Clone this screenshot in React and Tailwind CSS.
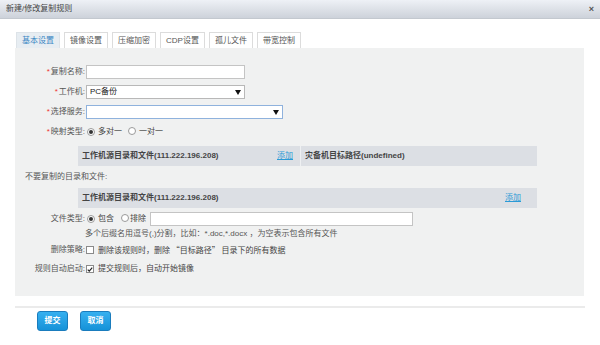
import React from 'react';

const tabs = ['基本设置', '镜像设置', '压缩加密', 'CDP设置', '孤儿文件', '带宽控制'];

function Radio({ checked }) {
  return (
    <span className="inline-flex w-[8px] h-[8px] rounded-full border border-[#9a9a9a] bg-white items-center justify-center">
      {checked && <span className="w-[4px] h-[4px] rounded-full bg-[#333]" />}
    </span>
  );
}

function Checkbox({ checked }) {
  return (
    <span className="inline-flex w-[8px] h-[8px] border border-[#8a8a8a] bg-white items-center justify-center">
      {checked && (
        <svg width="7" height="7" viewBox="0 0 8 8">
          <path d="M1 4.2 L3 6.2 L7 1.5" stroke="#222" strokeWidth="1.6" fill="none" />
        </svg>
      )}
    </span>
  );
}

function Label({ children, star }) {
  return (
    <div className="w-[70px] shrink-0 text-right text-[#555]">
      {star && <span className="text-[#e33] mr-[1px]">*</span>}
      {children}
    </div>
  );
}

function Select({ value, width, focus }) {
  return (
    <div
      className={`h-[14px] bg-white flex items-center justify-between px-[3px] border ${focus ? 'border-[#8fb2dd]' : 'border-[#b8b8b8]'}`}
      style={{ width }}
    >
      <span className="text-[#222]">{value}</span>
      <svg width="6" height="5" viewBox="0 0 6 5">
        <path d="M0 0 H6 L3 5 Z" fill="#111" />
      </svg>
    </div>
  );
}

export default function App() {
  return (
    <div className="w-[600px] h-[345px] bg-white font-['Liberation_Sans','Noto_Sans_CJK_SC',sans-serif] text-[8px] leading-none text-[#333] overflow-hidden">
      {/* title bar */}
      <div className="h-[19px] bg-gradient-to-b from-[#eef1f6] to-[#cdd2da] border-b border-[#c3c8cf] flex items-center justify-between pl-[6px] pr-[6px]">
        <span className="text-[#444]">新建/修改复制规则</span>
        <span className="text-[#555] text-[9px] font-bold">×</span>
      </div>

      {/* tabs */}
      <div className="mt-[13px] ml-[16px] flex gap-[4px]">
        {tabs.map((t, i) => (
          <div
            key={t}
            className={`h-[16px] px-[5px] flex items-center border border-b-0 ${i === 0 ? 'bg-[#e7edf2] border-[#dde3e8] text-[#3b86c4]' : 'bg-white border-[#dcdcdc] text-[#555]'}`}
          >
            {t}
          </div>
        ))}
      </div>

      {/* panel */}
      <div className="ml-[15px] w-[569px] bg-[#f0f1f1] pt-[17px] pb-[20px]">
        <div className="flex items-center h-[14px]">
          <Label star>复制名称:</Label>
          <div className="ml-[1px] w-[159px] h-[14px] bg-white border border-[#c4c4c4]" />
        </div>
        <div className="flex items-center h-[14px] mt-[6px]">
          <Label star>工作机:</Label>
          <div className="ml-[1px]">
            <Select value="PC备份" width={159} />
          </div>
        </div>
        <div className="flex items-center h-[14px] mt-[6px]">
          <Label star>选择服务:</Label>
          <div className="ml-[1px]">
            <Select value="" width={197} focus />
          </div>
        </div>
        <div className="flex items-center h-[14px] mt-[6px]">
          <Label star>映射类型:</Label>
          <div className="ml-[2px] flex items-center gap-[2px] text-[#444]">
            <Radio checked />
            <span className="ml-[1px]">多对一</span>
            <span className="ml-[4px]"><Radio /></span>
            <span className="ml-[1px]">一对一</span>
          </div>
        </div>

        {/* bar 1 */}
        <div className="ml-[63px] mt-[7px] w-[459px] h-[20px] bg-[#dcdfe4] flex items-center font-bold text-[#444]">
          <div className="w-[223px] h-full flex items-center justify-between pl-[4px] pr-[7px] border-r border-[#eef0f2]">
            <span>工作机源目录和文件(111.222.196.208)</span>
            <span className="font-normal text-[#2a9ad6] underline">添加</span>
          </div>
          <div className="pl-[4px]">灾备机目标路径(undefined)</div>
        </div>

        <div className="h-[14px] mt-[4px] pl-[10px] flex items-center text-[#555]">不要复制的目录和文件:</div>

        {/* bar 2 */}
        <div className="ml-[63px] mt-[4px] w-[459px] h-[20px] bg-[#dcdfe4] flex items-center justify-between pl-[4px] pr-[16px] font-bold text-[#444]">
          <span>工作机源目录和文件(111.222.196.208)</span>
          <span className="font-normal text-[#2a9ad6] underline">添加</span>
        </div>

        <div className="flex items-center h-[14px] mt-[4px]">
          <Label>文件类型:</Label>
          <div className="ml-[2px] flex items-center text-[#444]">
            <Radio checked />
            <span className="ml-[3px]">包含</span>
            <span className="ml-[7px]"><Radio /></span>
            <span className="ml-[1px]">排除</span>
            <div className="ml-[4px] w-[263px] h-[14px] bg-white border border-[#c4c4c4]" />
          </div>
        </div>
        <div className="h-[10px] mt-[3px] ml-[70px] flex items-center text-[#555]">
          多个后缀名用逗号(,)分割，比如：*.doc,*.docx ，为空表示包含所有文件
        </div>
        <div className="flex items-center h-[14px] mt-[4px]">
          <Label>删除策略:</Label>
          <div className="ml-[1px] flex items-center text-[#444]">
            <Checkbox />
            <span className="ml-[4px]">
              删除该规则时，删除<span className="font-['Noto_Sans_CJK_SC',sans-serif]"> “目标路径” </span>目录下的所有数据
            </span>
          </div>
        </div>
        <div className="flex items-center h-[14px] mt-[5px]">
          <Label>规则自动启动:</Label>
          <div className="ml-[1px] flex items-center text-[#444]">
            <Checkbox checked />
            <span className="ml-[4px]">提交规则后，自动开始镜像</span>
          </div>
        </div>
      </div>

      {/* footer */}
      <div className="ml-[15px] w-[570px] mt-[10px] border-t-2 border-[#ebebeb] pt-[3px] pl-[22px] flex gap-[12px]">
        <button className="w-[31px] h-[20px] rounded-[3px] bg-gradient-to-b from-[#35b0f0] to-[#1592d8] border border-[#1a7cbd] text-white font-bold text-[8px]">
          提交
        </button>
        <button className="w-[31px] h-[20px] rounded-[3px] bg-gradient-to-b from-[#35b0f0] to-[#1592d8] border border-[#1a7cbd] text-white font-bold text-[8px]">
          取消
        </button>
      </div>
    </div>
  );
}
